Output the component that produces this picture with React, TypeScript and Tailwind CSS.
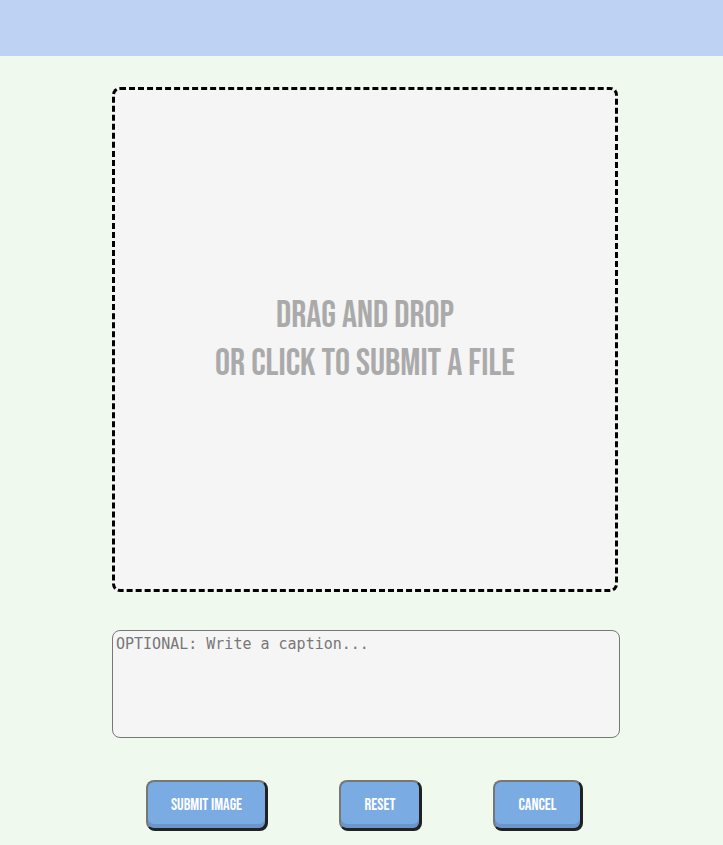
import React, { useState } from 'react';

const DISPLAY_FONT = "font-['Bebas_Neue','Liberation_Sans_Narrow','DejaVu_Sans_Condensed',Roboto,sans-serif]";

const ActionButton: React.FC<{ label: string; width: string }> = ({ label, width }) => (
  <button
    type="button"
    className={`${width} h-[50px] rounded-lg border-2 border-[#777] border-r-[#222] border-b-[#222] bg-[#7aabe3] shadow-[inset_0_-4px_0_#6b96cc,1px_1px_0_#222] text-white text-[16.5px] ${DISPLAY_FONT}`}
  >
    {label}
  </button>
);

export default function App() {
  const [caption, setCaption] = useState('');

  return (
    <div className="min-h-[845px] bg-[#f0f9ee]">
      {/* top bar */}
      <div className="h-14 bg-[#bed3f3]" />

      <div className="pl-[112px] pt-[31px]">
        {/* drop zone */}
        <div className="w-[506px] h-[505px] rounded-lg border-[3px] border-dashed border-black bg-[#f5f5f5] flex items-center justify-center cursor-pointer">
          <p className={`text-center text-[#aaa] text-[37.5px] leading-[48px] ${DISPLAY_FONT}`}>
            DRAG AND DROP
            <br />
            OR CLICK TO SUBMIT A FILE
          </p>
        </div>

        {/* caption */}
        <textarea
          value={caption}
          onChange={(e) => setCaption(e.target.value)}
          placeholder="OPTIONAL: Write a caption..."
          className="block mt-[38px] w-[508px] h-[108px] rounded-lg border border-[#777] bg-[#f5f5f5] px-[3px] py-[2px] text-[15px] leading-[22px] text-[#333] placeholder:text-[#777] font-['DejaVu_Sans_Mono',monospace] resize-none outline-none"
        />
      </div>

      {/* controls */}
      <div className="mt-[42px] flex justify-center gap-[72px] pl-[5px]">
        <ActionButton label="SUBMIT IMAGE" width="w-[121px]" />
        <ActionButton label="RESET" width="w-[82px]" />
        <ActionButton label="CANCEL" width="w-[89px]" />
      </div>
    </div>
  );
}
